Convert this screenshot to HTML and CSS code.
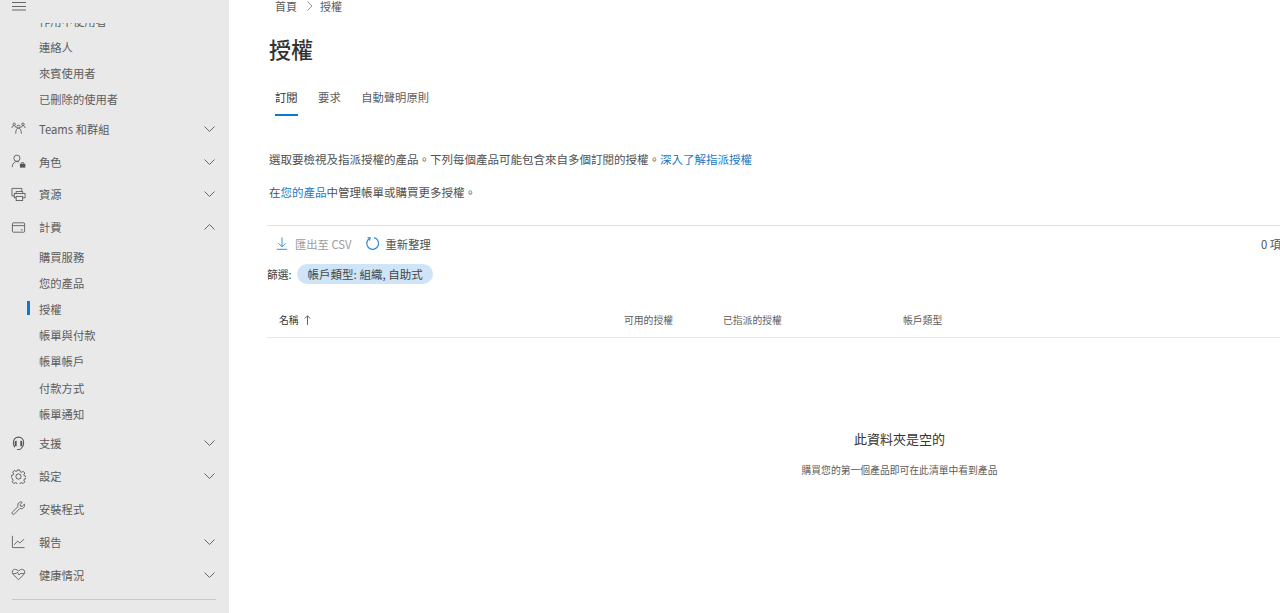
FILE: index.html
```html
<!DOCTYPE html>
<html lang="zh-Hant">
<head>
<meta charset="utf-8">
<title>授權</title>
<link rel="stylesheet" href="styles.css">
</head>
<body>
<div class="app">
  <aside class="sidebar">
    <div class="side-head">
      <svg class="burger" width="14" height="9" viewBox="0 0 14 9"><path d="M0 .5h14M0 4.500h14M0 8h14" stroke="#666" stroke-width="1" fill="none"/></svg>
    </div>
    <nav class="nav">
      <div class="nav-inner">
        <a class="sub">作用中使用者</a>
        <a class="sub">連絡人</a>
        <a class="sub">來賓使用者</a>
        <a class="sub">已刪除的使用者</a>
        <a class="item">
          <svg class="ico" viewBox="0 0 16 16"><g fill="none" stroke="#555" stroke-width=".9"><circle cx="3.400" cy="3.500" r="1.300"/><circle cx="12.800" cy="3.500" r="1.300"/><circle cx="8" cy="6" r="1.600"/><path d="M1 7.500c0-1.500 1-2.500 2.400-2.500.8 0 1.400.5 2.400 2.500M15 7.500c0-1.500-1-2.500-2.200-2.500-.8 0-1.400.5-2.600 2.500M5 13.500c0-3.500 1-5.900 3-5.900s3 2.400 3 5.900"/></g></svg>
          <span class="label">Teams 和群組</span>
          <svg class="chev" viewBox="0 0 11 6"><path d="M.5.5l5 5 5-5" fill="none" stroke="#666"/></svg>
        </a>
        <a class="item">
          <svg class="ico" viewBox="0 0 16 16"><g fill="none" stroke="#555" stroke-width=".9"><circle cx="6.300" cy="4.500" r="3.300"/><path d="M1.200 14c.4-3.500 2.200-6 5.100-6 .9 0 1.700.3 2.300.7"/><path d="M11 10.500V9.300h2.500v1.200"/></g><rect x="9.500" y="10.500" width="5.800" height="4" fill="#555"/></svg>
          <span class="label">角色</span>
          <svg class="chev" viewBox="0 0 11 6"><path d="M.5.5l5 5 5-5" fill="none" stroke="#666"/></svg>
        </a>
        <a class="item">
          <svg class="ico" viewBox="0 0 16 16"><g fill="none" stroke="#555" stroke-width=".9"><path d="M1 9.500V1.500h10.500V5M1 9.500h2.500"/><path d="M5.500 7V4.800h7V7"/><rect x="3.500" y="7" width="11.500" height="4.500"/><rect x="5.500" y="10" width="7" height="4.500" fill="#e9e9e9"/></g></svg>
          <span class="label">資源</span>
          <svg class="chev" viewBox="0 0 11 6"><path d="M.5.5l5 5 5-5" fill="none" stroke="#666"/></svg>
        </a>
        <a class="item">
          <svg class="ico" viewBox="0 0 16 16"><g fill="none" stroke="#555" stroke-width=".9"><rect x="1.500" y="3" width="13" height="10" rx="1"/><path d="M1.500 6h13M10.500 10.500h2"/></g></svg>
          <span class="label">計費</span>
          <svg class="chev" viewBox="0 0 11 6"><path d="M.5 5.500l5-5 5 5" fill="none" stroke="#666"/></svg>
        </a>
        <a class="sub">購買服務</a>
        <a class="sub">您的產品</a>
        <a class="sub active">授權</a>
        <a class="sub">帳單與付款</a>
        <a class="sub">帳單帳戶</a>
        <a class="sub">付款方式</a>
        <a class="sub">帳單通知</a>
        <a class="item">
          <svg class="ico" viewBox="0 0 16 16"><g fill="none" stroke="#555" stroke-width="1.100"><path d="M4.300 12C3 11 2.500 9.300 2.500 7.300 2.500 3.700 4.800 1.200 8 1.200s5.500 2.500 5.500 6.100c0 2-.5 3.700-1.800 4.700"/><path d="M4.500 6.500c0-.6.500-1 1-1v5c-.5 0-1-.4-1-1zM11.500 6.500c0-.6-.5-1-1-1v5c.5 0 1-.4 1-1z"/><path d="M11.500 12c-.3 1.600-1.500 2.500-3.200 2.500H6.500"/></g></svg>
          <span class="label">支援</span>
          <svg class="chev" viewBox="0 0 11 6"><path d="M.5.5l5 5 5-5" fill="none" stroke="#666"/></svg>
        </a>
        <a class="item">
          <svg class="ico" viewBox="0 0 16 16"><g fill="none" stroke="#555" stroke-width="1"><path d="M6.700 1h2.600l.5 1.900 1.400.6 1.700-1 1.800 1.800-1 1.700.6 1.400 1.900.5v2.200l-1.900.5-.6 1.400 1 1.700-1.800 1.800-1.700-1-1.400.6-.5 1.900H6.700l-.5-1.900-1.400-.6-1.700 1-1.800-1.800 1-1.700-.6-1.400L.3 9.100V6.900l1.900-.5.6-1.400-1-1.700 1.800-1.800 1.700 1 1.400-.6z"/><circle cx="8" cy="8" r="2.800"/></g></svg>
          <span class="label">設定</span>
          <svg class="chev" viewBox="0 0 11 6"><path d="M.5.5l5 5 5-5" fill="none" stroke="#666"/></svg>
        </a>
        <a class="item">
          <svg class="ico" viewBox="0 0 16 16"><path d="M10.500 1c-2 .1-3.400 1.700-3.300 3.600 0 .5.100.9.300 1.300l-5.700 5.600c-.8.800-.9 1.800-.3 2.400s1.600.5 2.400-.3l5.600-5.700c.4.200.9.300 1.400.3 1.900 0 3.600-1.500 3.600-3.500 0-.5-.1-.9-.2-1.300L12 5.600 10 5.500 9.900 3.600l2-2.200c-.5-.3-.9-.4-1.400-.4z" fill="none" stroke="#555" stroke-width=".95"/></svg>
          <span class="label">安裝程式</span>
        </a>
        <a class="item">
          <svg class="ico" viewBox="0 0 16 16"><path d="M1.500 2v12.500h13M3.500 11.500L7 7.500l2.500 2 4.500-4" fill="none" stroke="#555" stroke-width=".9"/></svg>
          <span class="label">報告</span>
          <svg class="chev" viewBox="0 0 11 6"><path d="M.5.5l5 5 5-5" fill="none" stroke="#666"/></svg>
        </a>
        <a class="item">
          <svg class="ico" viewBox="0 0 16 16"><path d="M8 13.500L2.300 8C.8 6.400 1 4.300 2.300 3.200 3.800 2 5.800 2.200 8 4.300c2.200-2.100 4.200-2.300 5.700-1.100 1.300 1.100 1.500 3.200 0 4.800zM2 7h3.500l1.300-1.500 1.700 3L10 7h4" fill="none" stroke="#555" stroke-width=".9"/></svg>
          <span class="label">健康情況</span>
          <svg class="chev" viewBox="0 0 11 6"><path d="M.5.5l5 5 5-5" fill="none" stroke="#666"/></svg>
        </a>
        <div class="side-rule"></div>
      </div>
    </nav>
  </aside>

  <main class="main">
    <div class="crumbs"><span>首頁</span><svg class="crumb-sep" viewBox="0 0 6 10"><path d="M.5.5L5 5 .5 9.500" fill="none" stroke="#888" stroke-width=".9"/></svg><span>授權</span></div>
    <h1 class="title">授權</h1>
    <div class="tabs">
      <span class="tab on">訂閱</span>
      <span class="tab">要求</span>
      <span class="tab">自動聲明原則</span>
    </div>
    <p class="para first">選取要檢視及指派授權的產品。下列每個產品可能包含來自多個訂閱的授權。<a class="link">深入了解指派授權</a></p>
    <p class="para second">在<a class="link">您的產品</a>中管理帳單或購買更多授權。</p>

    <section class="panel">
      <div class="toolbar">
        <div class="actions">
          <svg class="dl" viewBox="0 0 12 13"><path d="M6 .5v9M2.500 6.300L6 9.800l3.500-3.500M.8 12.300h10.400" fill="none" stroke="#3a8fd6" stroke-width="1"/></svg>
          <span class="muted">匯出至 CSV</span>
          <svg class="refresh" viewBox="0 0 16 16"><path d="M5.300 2.300a6.300 6.300 0 1 0 4.400-.5" fill="none" stroke="#2b88d8" stroke-width="1.300"/><path d="M2.800 1.500l2.800.6-.8 2.800" fill="none" stroke="#2b88d8" stroke-width="1.100"/></svg>
          <span class="plain">重新整理</span>
        </div>
        <span class="plain">0 項目</span>
      </div>
      <div class="filter">
        <span class="filter-label">篩選:</span>
        <span class="chip">帳戶類型: 組織, 自助式</span>
      </div>
      <div class="thead">
        <span class="th-name">名稱<svg class="sort" viewBox="0 0 7 10"><path d="M3.500 10V.8M.8 3.500L3.500.8l2.700 2.700" fill="none" stroke="#555" stroke-width=".9"/></svg></span>
        <span>可用的授權</span>
        <span>已指派的授權</span>
        <span>帳戶類型</span>
      </div>
      <div class="empty">
        <div class="empty-title">此資料夾是空的</div>
        <div class="empty-sub">購買您的第一個產品即可在此清單中看到產品</div>
      </div>
    </section>
  </main>
</div>
</body>
</html>
```

FILE: styles.css
```css
* { box-sizing: border-box; }
html, body { margin: 0; height: 100%; overflow: hidden; background: #fff; }
body {
  font-family: "Noto Sans CJK TC", "Liberation Sans", sans-serif;
  color: #4a4a4a;
  font-size: 11.5px;
}
.app { display: flex; height: 613px; width: 1280px; overflow: hidden; }

/* Sidebar */
.sidebar {
  flex: 0 0 229px;
  background: #e9e9e9;
  display: flex;
  flex-direction: column;
  overflow: hidden;
}
.side-head { flex: 0 0 23px; padding: 2px 0 0 12px; }
.burger { display: block; }
.nav { flex: 1; overflow: hidden; }
.nav-inner { margin-top: -15.3px; }
.sub {
  display: flex;
  align-items: center;
  position: relative;
  height: 26.2px;
  padding-left: 39px;
  color: #5c5c5c;
  font-size: 11.3px;
}
.sub.active::before {
  content: "";
  position: absolute;
  left: 27px;
  top: 5px;
  width: 3px;
  height: 14px;
  background: #0f78d4;
}
.item {
  display: flex;
  align-items: center;
  height: 32.8px;
  padding-left: 11px;
  padding-right: 14px;
  color: #5c5c5c;
  font-size: 11.3px;
}
.ico { width: 15px; height: 15px; flex: none; margin-right: 13px; }
.label { flex: 1; }
.chev { width: 11px; height: 6px; flex: none; }
.side-rule { height: 1px; margin: 8px 13px 0 12px; background: #c8c8c8; }

/* Main */
.main { flex: 1; min-width: 0; overflow: hidden; padding-left: 38px; }
.crumbs {
  display: flex;
  align-items: center;
  height: 12px;
  margin-left: 8px;
  color: #5c5c5c;
  font-size: 11px;
}
.crumb-sep { width: 6px; height: 10px; margin: 0 7px 0 10px; }
.title {
  margin: 21px 0 0 2px;
  height: 30px;
  line-height: 30px;
  font-size: 22px;
  font-weight: 500;
  color: #333;
}
.tabs { display: flex; height: 36px; margin: 17px 0 0 8px; }
.tab {
  display: flex;
  align-items: center;
  height: 36px;
  margin-right: 20.500px;
  font-size: 11.3px;
  color: #5c5c5c;
  border-bottom: 2px solid transparent;
}
.tab.on { color: #333; border-bottom-color: #0f78d4; }
.para { margin: 0 0 0 2px; height: 16px; line-height: 16px; color: #505050; }
.para.first { margin-top: 35px; }
.para.second { margin-top: 17px; }
.link { color: #1b78c8; }

.panel { width: 1265px; margin-top: 25px; border-top: 1px solid #e3e3e3; }
.toolbar {
  display: flex;
  align-items: center;
  height: 35px;
  padding-left: 9px;
}
.actions { display: flex; align-items: center; width: 985px; }
.dl { width: 12px; height: 13px; margin-right: 7px; }
.muted { color: #9c9c9c; font-size: 11.300px; }
.refresh { width: 15px; height: 15px; margin: 0 6px 0 13px; }
.plain { color: #505050; font-size: 11.300px; white-space: nowrap; }
.filter { display: flex; align-items: center; height: 20px; margin-top: 3px; }
.filter-label { font-size: 10.8px; color: #444; margin-right: 5px; }
.chip {
  display: flex;
  align-items: center;
  height: 20px;
  padding: 0 10px 0 11px;
  border-radius: 10px;
  background: #cfe4f6;
  color: #444;
  font-size: 11.500px;
  white-space: nowrap;
}
.thead {
  display: grid;
  grid-template-columns: 345px 99px 180px 1fr;
  align-items: center;
  height: 36px;
  margin-top: 18px;
  padding: 0 0 0 12px;
  border-bottom: 1px solid #e6e6e6;
  font-size: 9.8px;
  color: #5c5c5c;
}
.th-name { display: flex; align-items: center; color: #333; }
.sort { width: 7px; height: 10px; margin-left: 5px; }
.empty { text-align: center; padding-top: 92px; }
.empty-title { height: 18px; line-height: 18px; font-size: 13px; color: #333; }
.empty-sub { margin-top: 15px; height: 14px; line-height: 14px; font-size: 9.8px; color: #5c5c5c; }
```
